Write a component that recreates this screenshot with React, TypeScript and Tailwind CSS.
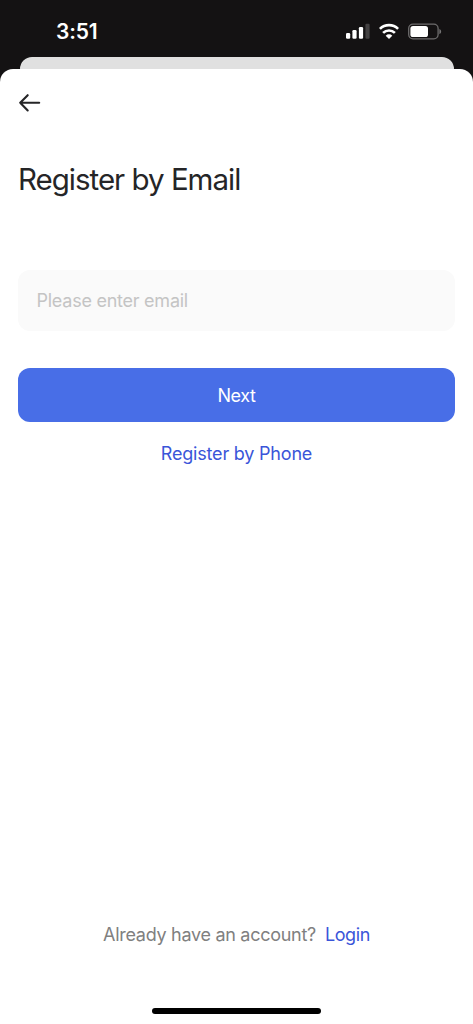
import type { ReactNode } from "react";

function SignalIcon() {
  return (
    <svg width="24" height="16" viewBox="0 0 24 16" fill="white">
      <rect x="0" y="10" width="4.2" height="5.8" rx="1.2" />
      <rect x="6.4" y="7.1" width="4.2" height="8.7" rx="1.2" />
      <rect x="12.9" y="4" width="4.2" height="11.8" rx="1.2" />
      <rect x="19.4" y="0.7" width="4.2" height="15.1" rx="1.2" fillOpacity="0.2" />
    </svg>
  );
}

function WifiIcon() {
  return (
    <svg width="20" height="16" viewBox="0 0 20 16" fill="none" stroke="white" strokeWidth="2.7">
      <path d="M0.9 5.9a13.1 13.1 0 0 1 18.2 0" />
      <path d="M4.1 9.9a8.5 8.5 0 0 1 11.8 0" />
      <path d="M10 15.9 6.7 12.7a4.6 4.6 0 0 1 6.6 0Z" fill="white" stroke="none" />
    </svg>
  );
}

function BatteryIcon() {
  return (
    <svg width="34" height="17" viewBox="0 0 34 17">
      <rect x="0.7" y="1.2" width="29.4" height="14.6" rx="4.3" fill="none" stroke="white" strokeOpacity="0.38" strokeWidth="1.3" />
      <rect x="2.4" y="2.9" width="17.6" height="11.2" rx="2.6" fill="white" />
      <path d="M31.4 5.9c2.3 1 2.3 4.2 0 5.2Z" fill="white" fillOpacity="0.42" />
    </svg>
  );
}

function StatusBar() {
  return (
    <div className="flex h-[57px] items-start justify-between pt-[23px] pr-[31px] pl-[56px]">
      <span className="-mt-[3px] text-[21px] leading-6 font-semibold tracking-[-0.2px] text-white">3:51</span>
      <div className="flex items-start">
        <SignalIcon />
        <span className="ml-[9px]">
          <WifiIcon />
        </span>
        <span className="ml-[9px]">
          <BatteryIcon />
        </span>
      </div>
    </div>
  );
}

function LinkButton({ children, className = "" }: { children: ReactNode; className?: string }) {
  return (
    <button type="button" className={`text-lg leading-6 text-[#3a55d9] ${className}`}>
      {children}
    </button>
  );
}

export default function App() {
  return (
    <div className="flex h-screen w-full flex-col overflow-hidden bg-[#141213] font-['Inter','Liberation_Sans',sans-serif]">
      <StatusBar />

      {/* Edge of the page underneath the sheet */}
      <div className="mx-[19.5px] h-3 shrink-0 rounded-t-[12px] bg-[#e0e0e0]" />

      <main className="flex flex-1 flex-col rounded-t-[13px] bg-white px-[18px]">
        <button type="button" aria-label="Back" className="mt-[24px] h-5 w-6">
          <svg width="24" height="20" viewBox="0 0 24 20" fill="none" stroke="#252527" strokeWidth="2.1" strokeLinecap="round" strokeLinejoin="round">
            <path d="M21.2 9.8H2.2M9.7 2.2 2.2 9.8l7.5 7.7" />
          </svg>
        </button>

        <h1 className="mt-12 text-[29.5px] leading-9 tracking-[-1px] text-[#252527]">Register by Email</h1>

        <input
          type="email"
          placeholder="Please enter email"
          className="mt-[73px] h-[61px] w-full rounded-[12px] bg-[#fafafa] px-[18.5px] text-lg tracking-[-0.25px] text-[#252527] outline-none placeholder:text-[#c4c4c4]"
        />

        <button type="button" className="mt-[37px] h-[54px] w-full rounded-[12px] bg-[#486ee7] pt-0.5 text-lg tracking-[-0.4px] text-white">
          Next
        </button>

        <LinkButton className="mt-5 self-center tracking-[-0.2px]">Register by Phone</LinkButton>

        <div className="mt-auto flex items-center justify-center">
          <span className="text-lg leading-6 tracking-[-0.29px] text-[#808080]">Already have an account?</span>
          <LinkButton className="ml-[9px] tracking-[-0.4px]">Login</LinkButton>
        </div>

        <div className="mt-[61px] mb-[10px] h-[6px] w-[169px] self-center rounded-full bg-black" />
      </main>
    </div>
  );
}
